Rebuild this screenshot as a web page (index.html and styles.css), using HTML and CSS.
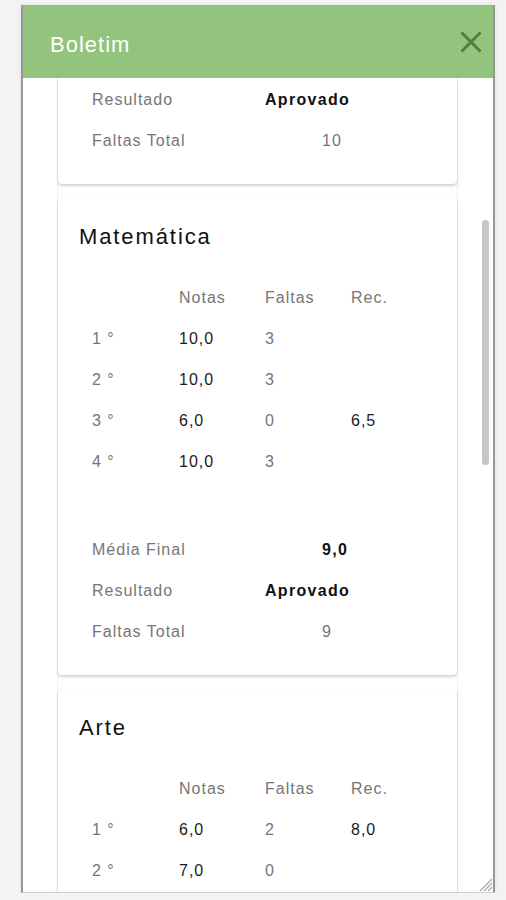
FILE: index.html
```html
<!DOCTYPE html>
<html lang="pt-BR">
<head>
<meta charset="utf-8">
<title>Boletim</title>
<link rel="stylesheet" href="styles.css">
</head>
<body>
<div class="dialog">
  <header class="dialog-head">
    <h1 class="dialog-title">Boletim</h1>
    <button class="close" aria-label="Fechar">
      <svg viewBox="0 0 24 24" width="24" height="24"><path d="M2.5 2.5 L21.5 21.5 M21.5 2.5 L2.5 21.5" stroke="#4f7f40" stroke-width="3" stroke-linecap="butt" fill="none"/></svg>
    </button>
  </header>
  <div class="dialog-body">
    <div class="cards">
      <section class="card card-tail">
        <div class="summary">
          <span class="lbl">Resultado</span><span class="val strong">Aprovado</span>
          <span class="lbl">Faltas Total</span><span class="val num muted">10</span>
        </div>
      </section>

      <section class="card">
        <h2 class="subject">Matemática</h2>
        <div class="grades">
          <span></span><span class="lbl">Notas</span><span class="lbl">Faltas</span><span class="lbl">Rec.</span>
          <span class="lbl">1 °</span><span class="val">10,0</span><span class="lbl">3</span><span class="val"></span>
          <span class="lbl">2 °</span><span class="val">10,0</span><span class="lbl">3</span><span class="val"></span>
          <span class="lbl">3 °</span><span class="val">6,0</span><span class="lbl">0</span><span class="val">6,5</span>
          <span class="lbl">4 °</span><span class="val">10,0</span><span class="lbl">3</span><span class="val"></span>
        </div>
        <div class="summary gap">
          <span class="lbl">Média Final</span><span class="val num strong">9,0</span>
          <span class="lbl">Resultado</span><span class="val strong">Aprovado</span>
          <span class="lbl">Faltas Total</span><span class="val num muted">9</span>
        </div>
      </section>

      <section class="card">
        <h2 class="subject">Arte</h2>
        <div class="grades">
          <span></span><span class="lbl">Notas</span><span class="lbl">Faltas</span><span class="lbl">Rec.</span>
          <span class="lbl">1 °</span><span class="val">6,0</span><span class="lbl">2</span><span class="val">8,0</span>
          <span class="lbl">2 °</span><span class="val">7,0</span><span class="lbl">0</span><span class="val"></span>
        </div>
      </section>
    </div>
    <div class="scroll-thumb"></div>
    <svg class="grip" viewBox="0 0 16 16" width="16" height="16">
      <path d="M15 3 L3 15 M15 7 L7 15 M15 11 L11 15" stroke="#a8a8a8" stroke-width="1.2" fill="none"/>
    </svg>
  </div>
</div>
</body>
</html>
```
FILE: styles.css
```css
* { box-sizing: border-box; }

html, body {
  margin: 0;
  padding: 0;
  background: #f3f3f4;
  font-family: "Liberation Sans", Arial, sans-serif;
}

.dialog {
  margin: 5px 11px 0 21px;
  width: 474px;
  height: 888px;
  background: #fff;
  border-left: 2px solid #979797;
  border-right: 2px solid #979797;
  border-bottom: 1px solid #d2d2d2;
  display: flex;
  flex-direction: column;
  box-shadow: 0 0 4px rgba(0,0,0,0.08);
}

.dialog-head {
  flex: 0 0 73px;
  background: #93c47d;
  display: flex;
  align-items: center;
  justify-content: space-between;
  padding: 0 10px 0 27px;
}

.dialog-title {
  margin: 6px 0 0 0;
  font-size: 22px;
  line-height: 1;
  font-weight: normal;
  color: #fff;
  letter-spacing: 1px;
}

.close {
  border: 0;
  background: none;
  padding: 0;
  width: 24px;
  height: 24px;
  display: flex;
  cursor: pointer;
}

.dialog-body {
  flex: 1;
  position: relative;
  overflow: hidden;
}

.cards {
  margin: 0 35px 0 34px;
  display: flex;
  flex-direction: column;
  gap: 14px;
  border-left: 1px solid #f0f0f0;
  border-right: 1px solid #f0f0f0;
  min-height: 100%;
}

.card {
  background: #fff;
  border-radius: 4px;
  box-shadow: 0 2px 3px rgba(0,0,0,0.18), 0 0 1px rgba(0,0,0,0.12);
  padding: 24px 21px 23px 21px;
}

.card-tail {
  padding-top: 1px;
  border-top-left-radius: 0;
  border-top-right-radius: 0;
}

.subject {
  margin: 0 0 25px 0;
  font-size: 22px;
  line-height: 30px;
  font-weight: normal;
  color: #111;
  letter-spacing: 1.9px;
}

.grades {
  display: grid;
  grid-template-columns: 87px 86px 86px 1fr;
  grid-auto-rows: 41px;
  align-items: center;
  padding-left: 13px;
  font-size: 16px;
  letter-spacing: 1px;
}

.summary {
  display: grid;
  grid-template-columns: 173px 1fr;
  grid-auto-rows: 41px;
  align-items: center;
  padding-left: 13px;
  font-size: 16px;
  letter-spacing: 1px;
}

.summary.gap { margin-top: 47px; }

.lbl { color: #767676; }
.val { color: #1c1c1c; }
.val.num { padding-left: 57px; }
.val.strong { font-weight: bold; color: #111; letter-spacing: 1.3px; }
.val.muted { color: #767676; }

.scroll-thumb {
  position: absolute;
  top: 142px;
  right: 4px;
  width: 7px;
  height: 245px;
  background: #c6c6c6;
  border-radius: 4px;
}

.grip {
  position: absolute;
  right: 0;
  bottom: 0;
}
```
